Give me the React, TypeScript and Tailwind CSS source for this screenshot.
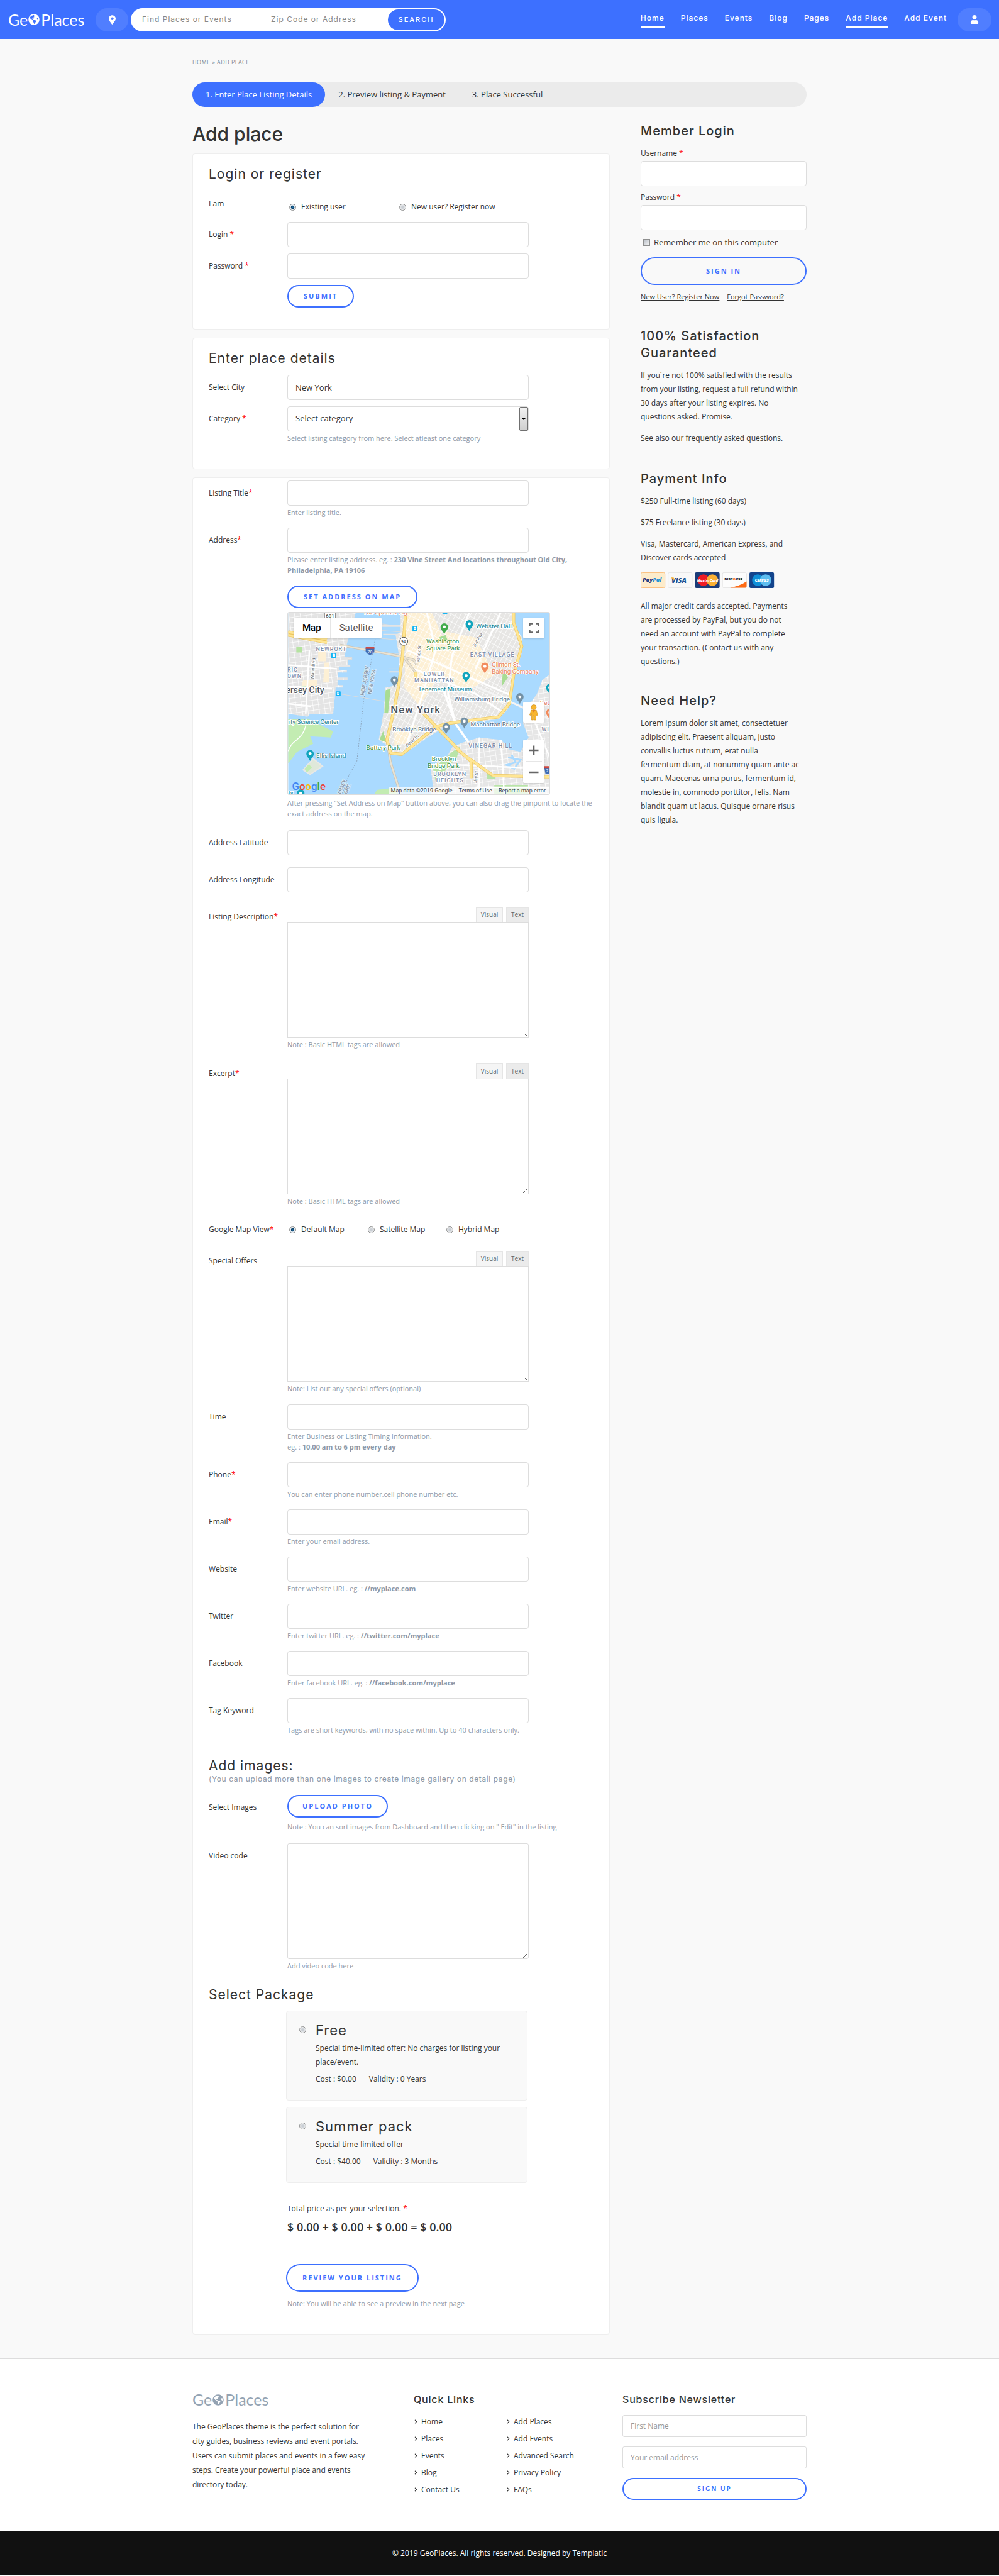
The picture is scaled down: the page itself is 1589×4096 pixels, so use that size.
import type { ReactNode } from 'react';
import { FaChevronRight, FaGlobeAmericas, FaMapMarkerAlt, FaUser } from 'react-icons/fa';

const inputClass =
    'block w-full h-10 px-3 rounded-[4px] border border-[#dddddd] bg-white text-[13px] text-[#333333]';
const pillClass =
    'inline-flex items-center justify-center rounded-full border-2 border-[#3d70ff] text-[#3d70ff] text-[11px] font-bold uppercase tracking-[2px]';
const radioClass =
    'appearance-none shrink-0 w-[11px] h-[11px] rounded-full border border-[#8e8f8f] bg-[radial-gradient(circle,#c9ced4_25%,#f6f6f6_75%)] checked:bg-[radial-gradient(circle,#1c6fa8_0%,#0b3d63_38%,#e8eef3_50%)]';

function Logo({ className }: { className: string }) {
    return (
        <a
            href="#"
            className={`inline-flex items-center font-['Lato',sans-serif] text-[25px] leading-[31px] ${className}`}
        >
            Ge
            <FaGlobeAmericas className="w-[18px] h-[18px] ml-px mr-0.5" />
            Places
        </a>
    );
}

function Required() {
    return <span className="text-[#ff0000]">*</span>;
}

function Title({ children }: { children: ReactNode }) {
    return (
        <h2 className="font-['Inter',sans-serif] text-[21px] leading-[27px] tracking-[1px] text-[#333333]">
            {children}
        </h2>
    );
}

function SideTitle({ children }: { children: ReactNode }) {
    return (
        <h3 className="mb-[11px] font-['Inter',sans-serif] text-[20px] leading-[27px] font-medium tracking-[1px] text-[#333333]">
            {children}
        </h3>
    );
}

function Card({ className, children }: { className: string; children: ReactNode }) {
    return (
        <section className={`px-[25px] rounded-[4px] border border-[#eeeeee] bg-white ${className}`}>
            {children}
        </section>
    );
}

function Help({ children }: { children: ReactNode }) {
    return <p className="mt-0.5 text-[11px] leading-[17px] text-[#8e99a7]">{children}</p>;
}

type RowProps = {
    id: string;
    label: string;
    required?: boolean;
    className?: string;
    labelClass?: string;
    children: ReactNode;
};

function Row({ id, label, required, className = 'mb-4', labelClass = 'leading-10', children }: RowProps) {
    return (
        <div className={`grid grid-cols-[125px_1fr] ${className}`}>
            <label htmlFor={id} className={labelClass}>
                {label}
                {required && <Required />}
            </label>
            <div>{children}</div>
        </div>
    );
}

function Field({
    id,
    label,
    required,
    className,
    type = 'text',
    value,
    children,
}: {
    id: string;
    label: string;
    required?: boolean;
    className?: string;
    type?: string;
    value?: string;
    children?: ReactNode;
}) {
    return (
        <Row id={id} label={label} required={required} className={className}>
            <div className="max-w-[384px]">
                <input id={id} type={type} defaultValue={value} className={inputClass} />
            </div>
            {children}
        </Row>
    );
}

function Editor({
    id,
    label,
    required,
    className,
    note,
}: {
    id: string;
    label: string;
    required?: boolean;
    className: string;
    note: string;
}) {
    return (
        <Row id={id} label={label} required={required} className={className} labelClass="leading-8">
            <div className="max-w-[384px]">
                <div className="flex justify-end gap-[5px] h-6 text-[10px] text-[#666666]">
                    <button type="button" className="w-[43px] border border-b-0 border-[#e5e5e5] bg-[#f5f5f5]">
                        Visual
                    </button>
                    <button type="button" className="w-[36px] border border-b-0 border-[#e5e5e5] bg-[#ebebeb]">
                        Text
                    </button>
                </div>
                <textarea id={id} className="block w-full h-[184px] border border-[#dddddd] bg-white p-2" />
            </div>
            <Help>{note}</Help>
        </Row>
    );
}

function Radio({ name, label, checked, className }: { name: string; label: string; checked?: boolean; className: string }) {
    return (
        <label className={`flex items-center gap-2 ${className}`}>
            <input type="radio" name={name} defaultChecked={checked} className={radioClass} />
            {label}
        </label>
    );
}

const manhattan =
    'M180 0V31L172 36L177 66V104L166 118L156 120L153 158L145 204L156 211L162 227L182 229L223 200L258 179L337 171L352 154L363 100L375 62L374 39L359 16L360 0Z';
const jersey =
    'M0 0H108L103 20L94 50L90 72H96V84H81V92H94V96H80V104H95V108H79V116H88V120H76L72 162H35L31 167L0 162Z';
const brooklyn =
    'M418 100L407 108L398 131L381 154L376 177L385 200L372 223L354 219L341 204L306 200L280 208L263 215L254 231L228 246L232 281L228 291H418Z';

function Pin({ x, y, fill }: { x: number; y: number; fill: string }) {
    return (
        <g transform={`translate(${x} ${y})`}>
            <path d="M0 9C-1 4-6 2-6-3a6 6 0 0 1 12 0C6 2 1 4 0 9Z" fill={fill} />
            <circle cy="-3" r="2.4" fill="#ffffff" />
        </g>
    );
}

function Station({ x, y }: { x: number; y: number }) {
    return (
        <g transform={`translate(${x} ${y})`}>
            <rect x="-4" y="-4" width="8" height="8" rx="1" fill="#12b5f5" />
            <rect x="-2" y="-3" width="4" height="5" rx="1" fill="#ffffff" />
            <path d="M-1.5-1h3" stroke="#12b5f5" />
        </g>
    );
}

function MapDrawing() {
    return (
        <svg viewBox="0 0 418 291" className="block w-full h-full" fontFamily="Roboto, sans-serif" aria-hidden="true">
            <defs>
                <pattern id="streets" width="7" height="11" patternUnits="userSpaceOnUse" patternTransform="rotate(28)">
                    <path d="M0 0H7M0 0V11" stroke="#ffffff" strokeWidth="1.6" />
                </pattern>
                <pattern id="blocks" width="9" height="8" patternUnits="userSpaceOnUse" patternTransform="rotate(-8)">
                    <path d="M0 0H9M0 0V8" stroke="#ffffff" strokeWidth="1.5" />
                </pattern>
                <clipPath id="island">
                    <path d={manhattan} />
                </clipPath>
            </defs>
            <rect width="418" height="291" fill="#aadaff" />
            <path d="M88 72H102V75H88ZM80 84H99V87H80ZM140 28L180 31M145 41L178 44M150 18L180 22M150 64L180 66M160 90H180M76 129L153 142" fill="#e8e8e8" stroke="#dcdcdc" />
            <path d="M148 20H182V23H148ZM152 34H182V36H152ZM162 94H180V96H162Z" fill="#e4e4e4" />

            {/* New Jersey side */}
            <path d={jersey} fill="#e4e4e4" />
            <path d={jersey} fill="url(#blocks)" />
            <path d="M48 60H60V78H48ZM24 108H46V122H20ZM58 80H66V112H56Z" fill="#fdf0d5" />
            <path d="M13 55H22V64H13ZM20 117H29V121H20Z" fill="#b5e3a1" />
            <path d="M0 118L70 122M34 60L28 162M0 84L78 90M0 146L36 150" stroke="#ffffff" strokeWidth="2.5" fill="none" />
            <path d="M0 171L31 170L72 190L68 200L35 198L40 210L14 223L0 242Z" fill="#c3ecb2" />
            <path d="M0 222C6 200 26 208 30 170" fill="none" stroke="#ffffff" strokeWidth="1.5" />
            <path d="M24 252L40 234L55 246L35 259Z" fill="#dfe8da" stroke="#e8e8e8" strokeWidth="2" />
            <path d="M26 250L33 243L38 248L30 256Z" fill="#c3ecb2" />
            <path d="M138 291L142 284L166 281L177 291Z" fill="#c3ecb2" />

            {/* Manhattan */}
            <path d={manhattan} fill="#e7e6e4" />
            <g clipPath="url(#island)">
                <path d="M190 0L230 0L262 70L210 150L186 120ZM250 30L300 40L330 100L280 130L240 90ZM170 190L205 180L190 210L170 212Z" fill="#fdf0d5" />
                <rect x="140" width="240" height="232" fill="url(#streets)" />
                <path d="M241 40L252 36L256 46L245 49ZM156 124L164 122L160 160L154 160ZM146 204L152 190L158 208ZM344 90L352 104L342 118Z" fill="#a8dc94" />
                <path d="M222 0L236 60L218 122L190 210M190 60L356 132M196 88L300 130L344 160M290 0L262 70L256 130L268 178M340 0L300 90" stroke="#ffffff" strokeWidth="3" fill="none" />
            </g>

            {/* Brooklyn */}
            <path d={brooklyn} fill="#e6e6e6" />
            <path d={brooklyn} fill="url(#blocks)" />
            <path d="M264 222L276 214L270 232L244 262L236 270L232 250ZM318 258H332V266H318ZM330 276H384V291H330Z" fill="#b9e4a8" />
            <path d="M352 232L372 236L362 250L350 244L364 240L358 228" fill="none" stroke="#aadaff" strokeWidth="3" />
            <path d="M306 200V291M341 204L346 291M270 244L418 250M386 154L418 230M300 280H418" stroke="#ffffff" strokeWidth="2.5" fill="none" />

            {/* tunnels, bridges and highways */}
            <path d="M83 52L127 60L180 70L201 76L206 84M184 70L204 96M158 204L164 240L180 291" stroke="#c9c3b6" strokeWidth="4" fill="none" />
            <path d="M83 52L127 60L180 70L201 76L206 84M184 70L204 96M158 204L164 240L180 291" stroke="#ebe3d2" strokeWidth="2.5" fill="none" />
            <path d="M250 127L268 178L289 208" stroke="#ffffff" strokeWidth="3.5" fill="none" />
            <path d="M300 118L380 154L418 170" stroke="#f4f4f4" strokeWidth="3" fill="none" />
            <g fill="none" strokeLinejoin="round">
                <path d="M188 0L183 70L177 116L169 158L158 204L164 225L182 227L236 183L258 177L337 167L354 146L361 100L374 54L361 16V0M217 162L280 227L328 261L418 263M270 218L293 238V265M0 31L62 43M0 36L62 48M204 96V104" stroke="#eec863" strokeWidth="5" />
                <path d="M188 0L183 70L177 116L169 158L158 204L164 225L182 227L236 183L258 177L337 167L354 146L361 100L374 54L361 16V0M217 162L280 227L328 261L418 263M270 218L293 238V265M0 31L62 43M0 36L62 48M204 96V104" stroke="#ffe694" strokeWidth="3.5" />
            </g>
            <path d="M140 39L131 89L121 139L110 238L97 261L86 291" fill="none" stroke="#8296ad" strokeDasharray="2 2" strokeWidth="0.8" />

            <g fill="#7f8fa9" fontSize="9" fontWeight="500" letterSpacing="1" textAnchor="middle" stroke="#ffffff" strokeWidth="2" paintOrder="stroke">
                <text x="69" y="61">NEWPORT</text>
                <text x="7" y="95">RIC</text>
                <text x="10" y="105">OWN</text>
                <text x="327" y="71">EAST VILLAGE</text>
                <text x="234" y="102">LOWER</text>
                <text x="234" y="112">MANHATTAN</text>
                <text x="324" y="217">VINEGAR HILL</text>
                <text x="259" y="262">BROOKLYN</text>
                <text x="259" y="272">HEIGHTS</text>
                <text x="412" y="190">WI</text>
            </g>
            <g fill="#8a97a8" fontSize="8" fontWeight="500" stroke="#d5ebfa" strokeWidth="2" paintOrder="stroke">
                <text transform="translate(121 133) rotate(-80)">NEW JERSEY</text>
                <text transform="translate(133 131) rotate(-80)">NEW YORK</text>
                <text transform="translate(84 291) rotate(-68)">ERSEY</text>
                <text transform="translate(94 291) rotate(-68)">ORK</text>
            </g>
            <g fill="#6b7077" fontSize="7" stroke="#ffffff" strokeWidth="2" paintOrder="stroke">
                <text transform="translate(41 106) rotate(-86)">Marin Blvd</text>
                <text transform="translate(210 80) rotate(-84)">Varick St</text>
                <text transform="translate(299 56) rotate(-60)">2nd Ave</text>
                <text transform="translate(190 216) rotate(-42)">Water St</text>
                <text transform="translate(302 273) rotate(-84)">Jay St</text>
            </g>
            <g fill="#4c5664" stroke="#ffffff" strokeWidth="2.5" paintOrder="stroke" fontWeight="500">
                <text x="164" y="161" fontSize="17" letterSpacing="1">New York</text>
                <text x="-4" y="129" fontSize="14">ersey City</text>
            </g>
            <g fontSize="10" stroke="#ffffff" strokeWidth="2" paintOrder="stroke">
                <text x="120" y="3" fill="#e8825a">The Spotted Pig</text>
                <text x="301" y="25" fill="#12808c">Webster Hall</text>
                <text x="208" y="126" fill="#12808c">Tenement Museum</text>
                <text x="45" y="233" fill="#12808c">Ellis Island</text>
                <text x="0" y="178" fill="#12808c">rty Science Center</text>
                <text x="221" y="49" fill="#2f8a3b">Washington</text>
                <text x="221" y="60" fill="#2f8a3b">Square Park</text>
                <text x="125" y="220" fill="#2f8a3b">Battery Park</text>
                <text x="230" y="238" fill="#2f8a3b">Brooklyn</text>
                <text x="223" y="249" fill="#2f8a3b">Bridge Park</text>
                <text x="326" y="87" fill="#e8825a">Clinton St.</text>
                <text x="326" y="98" fill="#e8825a">Baking Company</text>
                <text x="403" y="148" fill="#e8825a">Det</text>
                <text x="266" y="142" fill="#5b6f82">Williamsburg Bridge</text>
                <text x="292" y="182" fill="#5b6f82">Manhattan Bridge</text>
                <text x="167" y="190" fill="#5b6f82">Brooklyn Bridge</text>
                <text x="0" y="292" fill="#12808c">ty</text>
            </g>

            <Pin x={250} y={26} fill="#41ab4b" />
            <Pin x={290} y={21} fill="#12a5bd" />
            <Pin x={285} y={104} fill="#12a5bd" />
            <Pin x={315} y={89} fill="#f28c5e" />
            <Pin x={170} y={111} fill="#7491a5" />
            <Pin x={371} y={138} fill="#7491a5" />
            <Pin x={282} y={177} fill="#7491a5" />
            <Pin x={253} y={186} fill="#7491a5" />
            <Pin x={35} y={229} fill="#12a5bd" />
            <Pin x={20} y={292} fill="#12a5bd" />
            <Pin x={419} y={123} fill="#12a5bd" />
            <Pin x={419} y={163} fill="#f28c5e" />
            <Station x={203} y={26} />
            <Station x={73} y={69} />
            <Station x={80} y={130} />
            <Station x={251} y={-2} />
            <rect x="58" y="0" width="18" height="10" fill="#ffffff" stroke="#444444" />
            <text x="67" y="8" fontSize="8" textAnchor="middle" fill="#333333">681</text>
            <circle cx="185" cy="46" r="6.5" fill="#ffffff" stroke="#555555" />
            <text x="185" y="49" fontSize="7" textAnchor="middle" fill="#333333">9A</text>
            <path d="M124 57H138V62Q137 66 131 68Q125 66 124 62Z" fill="#3f6cb5" />
            <path d="M124 55H138V58H124Z" fill="#d04a42" />
            <text x="131" y="65" fontSize="7" textAnchor="middle" fill="#ffffff">78</text>
            <path d="M410 248H424V258H412Z" fill="#3f6cb5" />
            <path d="M410 246H424V249H410Z" fill="#d04a42" />
            <text x="413" y="256" fontSize="7" fill="#ffffff">2</text>
            <text x="6" y="284" fontSize="17" fontWeight="500">
                <tspan fill="#4285f4">G</tspan>
                <tspan fill="#ea4335">o</tspan>
                <tspan fill="#fbbc05">o</tspan>
                <tspan fill="#4285f4">g</tspan>
                <tspan fill="#34a853">l</tspan>
                <tspan fill="#ea4335">e</tspan>
            </text>
        </svg>
    );
}

function GoogleMap() {
    return (
        <div className="relative mt-1.5 max-w-[418px] h-[291px] overflow-hidden rounded-[3px] border border-[#dddddd] font-['Roboto',sans-serif]">
            <MapDrawing />
            <div className="absolute left-[9px] top-2 flex h-[33px] rounded-[2px] bg-white shadow text-[15px]">
                <button type="button" className="px-[14px] font-medium text-black">Map</button>
                <button type="button" className="px-[14px] border-l border-[#e6e6e6] text-[#565656]">Satellite</button>
            </div>
            <button type="button" aria-label="Toggle fullscreen" className="absolute right-2 top-2 grid place-items-center w-[34px] h-[33px] rounded-[2px] bg-white shadow">
                <svg viewBox="0 0 18 18" className="w-[15px] h-[15px]" fill="#666666">
                    <path d="M0 0v6h2V2h4V0zM16 0h-4v2h4v4h2V0zM16 16h-4v2h6v-6h-2zM2 12H0v6h6v-2H2z" />
                </svg>
            </button>
            <div className="absolute right-2 top-[142px] grid place-items-center w-[34px] h-[33px] rounded-[2px] bg-white shadow">
                <svg viewBox="0 0 14 26" className="h-[26px]">
                    <circle cx="7" cy="4.5" r="4" fill="#f9b62d" stroke="#c88a1c" strokeWidth="0.6" />
                    <path d="M3 9h8l2.5 8-2 .8-1-3V25H7.600v-7H6.400v7H3.500V14.800l-1 3-2-.8z" fill="#f9b62d" stroke="#c88a1c" strokeWidth="0.6" />
                    <path d="M4.500 9L7 13l2.500-4z" fill="#e08326" />
                </svg>
            </div>
            <div className="absolute right-2 top-[202px] flex flex-col w-[34px] rounded-[2px] bg-white shadow">
                <button type="button" aria-label="Zoom in" className="grid place-items-center h-[34px]">
                    <svg viewBox="0 0 16 16" className="w-4 h-4" fill="#666666">
                        <path d="M6.700 0.500h2.600v6.200h6.200v2.600H9.300v6.200H6.700V9.300H.500V6.700h6.200z" />
                    </svg>
                </button>
                <span className="mx-1 border-t border-[#e6e6e6]" />
                <button type="button" aria-label="Zoom out" className="grid place-items-center h-[34px]">
                    <svg viewBox="0 0 16 16" className="w-4 h-4" fill="#666666">
                        <path d="M.500 6.700h15v2.600h-15z" />
                    </svg>
                </button>
            </div>
            <div className="absolute right-0 bottom-0 flex gap-2.5 h-3 pl-1 pr-1.5 bg-white/70 text-[9px] leading-3 text-[#444444]">
                <span>Map data ©2019 Google</span>
                <a href="#">Terms of Use</a>
                <a href="#">Report a map error</a>
            </div>
        </div>
    );
}

function PaymentCards() {
    return (
        <svg viewBox="0 0 256 30" className="block w-[213px] h-[25px]" role="img" aria-label="PayPal, Visa, MasterCard, Discover, Cirrus" fontFamily="Open Sans, sans-serif" fontWeight="800">
            <rect x="0.5" y="0.5" width="46" height="29" rx="2.5" fill="#fdeccb" stroke="#fbb467" />
            <text x="3.5" y="18.5" fontSize="11" fontStyle="italic" fill="#1f3c82">Pay<tspan fill="#1f93d6">Pal</tspan></text>
            <rect x="52.5" y="0.5" width="46" height="29" rx="2.5" fill="#f8f8f8" stroke="#e2e2e2" />
            <text x="59" y="20" fontSize="13" fontStyle="italic" fill="#20508f">VISA</text>
            <path d="M58 10h5l2 6z" fill="#f3ac2b" />
            <rect x="104" width="47" height="30" rx="2.5" fill="#1b3b78" />
            <circle cx="120" cy="15" r="11" fill="#ee1c25" />
            <circle cx="137" cy="15" r="11" fill="#fbb034" />
            <text x="128" y="18" fontSize="7" fontStyle="italic" textAnchor="middle" fill="#ffffff">MasterCard</text>
            <rect x="156.5" y="0.5" width="46" height="29" rx="2.5" fill="#fcfcfc" stroke="#e2e2e2" />
            <path d="M171 29.500Q190 26 202.500 17.500V27Q202.500 29.500 200 29.500Z" fill="#ff6a13" />
            <text x="160" y="16" fontSize="7" fill="#222222">DISC<tspan fill="#ff6a13">O</tspan>VER</text>
            <rect x="208" width="47" height="30" rx="2.5" fill="#13448c" />
            <circle cx="224" cy="15" r="11" fill="#0d8fd8" />
            <circle cx="239" cy="15" r="11" fill="#5cbdf0" />
            <text x="231.5" y="18" fontSize="9" fontStyle="italic" textAnchor="middle" fill="#ffffff">Cirrus</text>
        </svg>
    );
}

const navLinks = [
    { label: 'Home', active: true },
    { label: 'Places', active: false },
    { label: 'Events', active: false },
    { label: 'Blog', active: false },
    { label: 'Pages', active: false },
    { label: 'Add Place', active: true },
    { label: 'Add Event', active: false },
];

function Header() {
    return (
        <header className="flex items-center justify-between h-[62px] pl-[13px] pr-3 bg-[#3d70ff] text-white font-['Inter',sans-serif]">
            <div className="flex items-center">
                <div className="w-[139px]">
                    <Logo className="text-white" />
                </div>
                <button type="button" aria-label="Location" className="grid place-items-center w-[52px] h-[37px] mr-1 rounded-full bg-white/10">
                    <FaMapMarkerAlt className="w-[11px] h-[15px]" />
                </button>
                <form className="flex items-center w-[501px] h-[37px] pl-[18px] pr-0.5 rounded-full bg-white">
                    <input aria-label="Find Places or Events" placeholder="Find Places or Events" className="w-[205px] text-[12px] tracking-[1px] text-[#333333] placeholder:text-[#888888]" />
                    <input aria-label="Zip Code or Address" placeholder="Zip Code or Address" className="flex-1 min-w-0 text-[12px] tracking-[1px] text-[#333333] placeholder:text-[#888888]" />
                    <button type="button" className="w-[90px] h-[33px] rounded-full bg-[#3d70ff] text-[11px] font-medium tracking-[2px]">
                        SEARCH
                    </button>
                </form>
            </div>
            <div className="flex items-center gap-[17px]">
                <nav className="flex items-center gap-[26px] text-[12px] font-medium tracking-[1px]">
                    {navLinks.map((link) => (
                        <a
                            key={link.label}
                            href="#"
                            className={link.active ? 'pt-0.5 pb-1 border-b-2 border-white' : 'pt-0.5 pb-1 border-b-2 border-transparent'}
                        >
                            {link.label}
                        </a>
                    ))}
                </nav>
                <button type="button" aria-label="Account" className="grid place-items-center w-[54px] h-[37px] rounded-full bg-white/10">
                    <FaUser className="w-3.5 h-3.5" />
                </button>
            </div>
        </header>
    );
}

function Package({ title, text, cost, validity }: { title: string; text: string; cost: string; validity: string }) {
    return (
        <label className="flex gap-[15px] mb-2.5 pt-4 px-5 pb-[22px] max-w-[384px] rounded-[4px] border border-[#eeeeee] bg-[#f9f9f9]">
            <input type="radio" name="package" className={`mt-2 ${radioClass}`} />
            <span className="block leading-[22px]">
                <span className="block mb-1 font-['Inter',sans-serif] text-[22px] leading-7 tracking-[1px]">{title}</span>
                <span className="block mb-[5px]">{text}</span>
                <span className="flex gap-5">
                    <span>Cost : {cost}</span>
                    <span>Validity : {validity}</span>
                </span>
            </span>
        </label>
    );
}

function PlaceForm() {
    return (
        <form>
            <Card className="pt-[18px] pb-[34px]">
                <Title>Login or register</Title>
                <div className="grid grid-cols-[125px_1fr] mt-5 mb-[13px] leading-[22px]">
                    <span className="pt-[3px]">I am</span>
                    <div className="flex pt-2 pl-[3px]">
                        <Radio name="user" label="Existing user" checked className="w-[175px]" />
                        <Radio name="user" label="New user? Register now" className="" />
                    </div>
                </div>
                <Field id="login" label="Login " required className="mb-2.5" />
                <Field id="password" label="Password " required type="password" className="mb-2.5" />
                <button type="button" className={`ml-[125px] h-9 px-6 ${pillClass}`}>Submit</button>
            </Card>

            <Card className="mt-[13px] pt-[18px] pb-[40px]">
                <Title>Enter place details</Title>
                <div className="mt-[13px]">
                    <Field id="city" label="Select City" value="New York" className="mb-2.5" />
                    <Row id="category" label="Category " required className="">
                        <div className="relative max-w-[384px]">
                            <select id="category" className={`appearance-none ${inputClass}`}>
                                <option>Select category</option>
                            </select>
                            <span className="pointer-events-none absolute right-px top-px bottom-px grid place-items-center w-[14px] rounded-[2px] border border-[#707070] bg-linear-to-b from-[#f2f2f2] to-[#cfcfcf]">
                                <svg viewBox="0 0 6 3" className="w-1.5 h-[3px]">
                                    <path d="M0 0h6L3 3z" fill="#000000" />
                                </svg>
                            </span>
                        </div>
                        <Help>Select listing category from here. Select atleast one category</Help>
                    </Row>
                </div>
            </Card>

            <Card className="mt-[13px] pt-1 pb-10">
                <Field id="title" label="Listing Title" required>
                    <Help>Enter listing title.</Help>
                </Field>
                <Field id="address" label="Address" required className="mb-[18px]">
                    <Help>
                        Please enter listing address. eg. : <b>230 Vine Street And locations throughout Old City, Philadelphia, PA 19106</b>
                    </Help>
                    <button type="button" className={`mt-4 h-9 px-6 ${pillClass}`}>Set address on map</button>
                    <GoogleMap />
                    <div className="mt-1">
                        <Help>After pressing "Set Address on Map" button above, you can also drag the pinpoint to locate the exact address on the map.</Help>
                    </div>
                </Field>
                <Field id="latitude" label="Address Latitude" className="mb-[19px]" />
                <Field id="longitude" label="Address Longitude" className="mb-[23px]" />
                <Editor id="description" label="Listing Description" required className="mb-[22px]" note="Note : Basic HTML tags are allowed" />
                <Editor id="excerpt" label="Excerpt" required className="mb-[22px]" note="Note : Basic HTML tags are allowed" />
                <div className="grid grid-cols-[125px_1fr] mb-[19px] leading-[30px]">
                    <span>
                        Google Map View
                        <Required />
                    </span>
                    <div className="flex pl-[3px]">
                        <Radio name="map" label="Default Map" checked className="w-[125px]" />
                        <Radio name="map" label="Satellite Map" className="w-[125px]" />
                        <Radio name="map" label="Hybrid Map" className="" />
                    </div>
                </div>
                <Editor id="offers" label="Special Offers" className="mb-[17px]" note="Note: List out any special offers (optional)" />
                <Field id="time" label="Time">
                    <Help>
                        Enter Business or Listing Timing Information.
                        <br />
                        eg. : <b>10.00 am to 6 pm every day</b>
                    </Help>
                </Field>
                <Field id="phone" label="Phone" required>
                    <Help>You can enter phone number,cell phone number etc.</Help>
                </Field>
                <Field id="email" label="Email" required>
                    <Help>Enter your email address.</Help>
                </Field>
                <Field id="website" label="Website">
                    <Help>Enter website URL. eg. : <b>//myplace.com</b></Help>
                </Field>
                <Field id="twitter" label="Twitter">
                    <Help>Enter twitter URL. eg. : <b>//twitter.com/myplace</b></Help>
                </Field>
                <Field id="facebook" label="Facebook">
                    <Help>Enter facebook URL. eg. : <b>//facebook.com/myplace</b></Help>
                </Field>
                <Field id="tags" label="Tag Keyword" className="mb-[35px]">
                    <Help>Tags are short keywords, with no space within. Up to 40 characters only.</Help>
                </Field>

                <Title>Add images:</Title>
                <p className="mb-[17px] font-['Inter',sans-serif] text-[12px] leading-4 tracking-wider text-[#8e99a7]">
                    (You can upload more than one images to create image gallery on detail page)
                </p>
                <Row id="images" label="Select Images" className="mb-[18px]">
                    <button type="button" id="images" className={`h-9 px-[22px] mb-1 ${pillClass}`}>Upload photo</button>
                    <Help>Note : You can sort images from Dashboard and then clicking on " Edit" in the listing</Help>
                </Row>
                <Row id="video" label="Video code" className="mb-6">
                    <textarea id="video" className="block w-full max-w-[384px] h-[184px] rounded-[3px] border border-[#dddddd] bg-white p-2" />
                    <Help>Add video code here</Help>
                </Row>

                <Title>Select Package</Title>
                <div className="ml-[123px] mt-3">
                    <Package title="Free" text="Special time-limited offer: No charges for listing your place/event." cost="$0.00" validity="0 Years" />
                    <Package title="Summer pack" text="Special time-limited offer" cost="$40.00" validity="3 Months" />
                    <div className="pl-0.5 mt-[30px] mb-[45px]">
                        <p className="leading-[22px]">Total price as per your selection. <Required /></p>
                        <p className="mt-1 text-[18px] leading-7 font-semibold">$ 0.00 + $ 0.00 + $ 0.00 = $ 0.00</p>
                    </div>
                    <button type="button" className={`h-11 px-6 mb-2 ${pillClass}`}>Review your listing</button>
                    <div className="pl-0.5">
                        <Help>Note: You will be able to see a preview in the next page</Help>
                    </div>
                </div>
            </Card>
        </form>
    );
}

function SideText({ className = '', children }: { className?: string; children: ReactNode }) {
    return <p className={`max-w-[253px] ${className}`}>{children}</p>;
}

function Sidebar() {
    return (
        <aside className="leading-[22px]">
            <form>
                <SideTitle>Member Login</SideTitle>
                <label htmlFor="member-user">Username <Required /></label>
                <input id="member-user" className={`mt-px ${inputClass}`} />
                <label htmlFor="member-pass" className="block mt-[7px]">Password <Required /></label>
                <input id="member-pass" type="password" className={`mt-px ${inputClass}`} />
                <label className="flex items-center gap-1.5 mt-2 pl-1 text-[13px]">
                    <input type="checkbox" className="appearance-none w-[11px] h-[11px] border border-[#8e8f8f] bg-linear-to-br from-[#b9bfc7] to-[#f6f6f6]" />
                    Remember me on this computer
                </label>
                <button type="button" className={`mt-[13px] w-full h-11 ${pillClass}`}>Sign in</button>
                <div className="flex gap-3 mt-2 text-[11px] underline">
                    <a href="#">New User? Register Now</a>
                    <a href="#">Forgot Password?</a>
                </div>
            </form>
            <section className="mt-[38px]">
                <SideTitle>100% Satisfaction Guaranteed</SideTitle>
                <SideText className="mb-3">
                    If you´re not 100% satisfied with the results from your listing, request a full refund within 30 days after your listing expires. No questions asked. Promise.
                </SideText>
                <SideText>See also our frequently asked questions.</SideText>
            </section>
            <section className="mt-10">
                <SideTitle>Payment Info</SideTitle>
                <SideText className="mb-3">$250 Full-time listing (60 days)</SideText>
                <SideText className="mb-3">$75 Freelance listing (30 days)</SideText>
                <SideText className="mb-3">Visa, Mastercard, American Express, and Discover cards accepted</SideText>
                <PaymentCards />
                <SideText className="mt-[18px]">
                    All major credit cards accepted. Payments are processed by PayPal, but you do not need an account with PayPal to complete your transaction. (Contact us with any questions.)
                </SideText>
            </section>
            <section className="mt-[38px]">
                <SideTitle>Need Help?</SideTitle>
                <SideText>
                    Lorem ipsum dolor sit amet, consectetuer adipiscing elit. Praesent aliquam, justo convallis luctus rutrum, erat nulla fermentum diam, at nonummy quam ante ac quam. Maecenas urna purus, fermentum id, molestie in, commodo porttitor, felis. Nam blandit quam ut lacus. Quisque ornare risus quis ligula.
                </SideText>
            </section>
        </aside>
    );
}

const quickLinks = [
    ['Home', 'Places', 'Events', 'Blog', 'Contact Us'],
    ['Add Places', 'Add Events', 'Advanced Search', 'Privacy Policy', 'FAQs'],
];

function FooterTitle({ children }: { children: ReactNode }) {
    return <h4 className="font-['Inter',sans-serif] text-[16px] leading-6 font-medium tracking-wider">{children}</h4>;
}

function Footer() {
    return (
        <footer>
            <div className="border-t border-[#dddddd] bg-white">
                <div className="grid grid-cols-[352px_1fr_293px] max-w-[977px] mx-auto pt-[49px] pb-[49px]">
                    <div>
                        <Logo className="text-[#94a3b3]" />
                        <p className="mt-4 max-w-[280px] leading-[23px]">
                            The GeoPlaces theme is the perfect solution for city guides, business reviews and event portals. Users can submit places and events in a few easy steps. Create your powerful place and events directory today.
                        </p>
                    </div>
                    <div className="pt-[3px]">
                        <FooterTitle>Quick Links</FooterTitle>
                        <div className="flex mt-[10px]">
                            {quickLinks.map((column) => (
                                <ul key={column[0]} className="w-[147px]">
                                    {column.map((item) => (
                                        <li key={item}>
                                            <a href="#" className="flex items-center gap-[5px] leading-[27px]">
                                                <FaChevronRight className="w-[7px] h-[7px]" />
                                                {item}
                                            </a>
                                        </li>
                                    ))}
                                </ul>
                            ))}
                        </div>
                    </div>
                    <form className="pt-[3px]">
                        <FooterTitle>Subscribe Newsletter</FooterTitle>
                        <input aria-label="First Name" placeholder="First Name" className="block w-full h-[35px] mt-[13px] mb-[15px] px-3 rounded-[3px] border border-[#dddddd] text-[12px] placeholder:text-[#999999]" />
                        <input aria-label="Your email address" placeholder="Your email address" className="block w-full h-[35px] mb-[15px] px-3 rounded-[3px] border border-[#dddddd] text-[12px] placeholder:text-[#999999]" />
                        <button type="button" className="w-full h-[35px] rounded-full border-2 border-[#3d70ff] text-[#3d70ff] text-[10px] font-bold tracking-[2px]">
                            SIGN UP
                        </button>
                    </form>
                </div>
            </div>
            <div className="bg-[#111111] py-6 text-center leading-[23px] text-white">
                © 2019 GeoPlaces. All rights reserved. Designed by Templatic
            </div>
        </footer>
    );
}

export default function App() {
    return (
        <div className="bg-[#f9f9f9] font-['Open_Sans',sans-serif] text-[12px] text-[#333333]">
            <Header />
            <main className="max-w-[977px] mx-auto pt-[30px] pb-[38px]">
                <p className="text-[9px] leading-[14px] tracking-wider uppercase text-[#7d8896]">
                    <a href="#">Home</a> » Add Place
                </p>
                <ol className="flex mt-[25px] h-[39px] rounded-full bg-[#ebebeb] text-[13px] leading-[39px]">
                    <li className="px-[21px] rounded-full bg-[#3d70ff] text-white">1. Enter Place Listing Details</li>
                    <li className="px-[21px]">2. Preview listing &amp; Payment</li>
                    <li className="px-[21px]">3. Place Successful</li>
                </ol>
                <div className="grid grid-cols-[1fr_264px] gap-x-[49px] mt-[25px]">
                    <div>
                        <h1 className="mb-[13px] font-['Inter',sans-serif] text-[30px] leading-9 font-medium">Add place</h1>
                        <PlaceForm />
                    </div>
                    <Sidebar />
                </div>
            </main>
            <Footer />
        </div>
    );
}
